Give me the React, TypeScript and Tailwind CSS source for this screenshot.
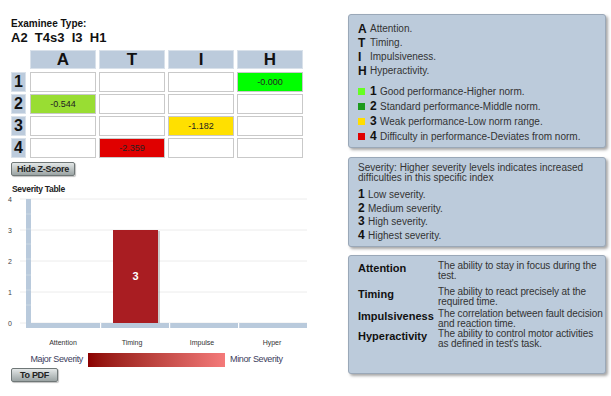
import React from "react";

const COLS = ["A", "T", "I", "H"];

// grid[row][col] -> [value, bg]
const CELLS: Record<string, [string, string]> = {
  "0-3": ["-0.000", "bg-[#00ff00]"],
  "1-0": ["-0.544", "bg-[#99dd33]"],
  "2-2": ["-1.182", "bg-[#ffe000]"],
  "3-1": ["-2.359", "bg-[#e00000]"],
};

function Btn({ children, className = "" }: { children: React.ReactNode; className?: string }) {
  return (
    <button
      type="button"
      className={
        "flex h-[14px] items-center justify-center whitespace-nowrap rounded-[2px] border border-[#6f7777] bg-gradient-to-b from-[#e3e7e7] to-[#9ba4a4] text-[9px] font-bold leading-[12px] tracking-[-0.3px] text-[#222] shadow-[1px_1px_1px_rgba(0,0,0,0.25)] " +
        className
      }
    >
      {children}
    </button>
  );
}

function ZTable() {
  return (
    <div className="ml-[11px] mt-[4px] flex shrink-0 flex-col">
      <div className="flex h-[19px] gap-[3px] pl-[19px]">
        {COLS.map((c) => (
          <div
            key={c}
            className="flex w-[66px] items-center justify-center border border-[#d9e1ea] bg-[#bccbdc] text-[17px] font-bold leading-none text-[#111]"
          >
            {c}
          </div>
        ))}
      </div>
      <div className="mt-[3px] flex flex-col gap-[2px]">
        {[0, 1, 2, 3].map((r) => (
          <div key={r} className="flex h-[20px]">
            <div className="flex w-[15px] items-center justify-center border border-[#d9e1ea] bg-[#bccbdc] text-[16px] font-bold leading-none text-[#111]">
              {r + 1}
            </div>
            <div className="ml-[4px] flex gap-[3px]">
              {COLS.map((_, c) => {
                const cell = CELLS[`${r}-${c}`];
                return (
                  <div
                    key={c}
                    className={
                      "flex w-[66px] items-center justify-center border border-[#c9c9c9] text-[9px] leading-none text-[#222] " +
                      (cell ? cell[1] : "bg-white")
                    }
                  >
                    {cell ? cell[0] : ""}
                  </div>
                );
              })}
            </div>
          </div>
        ))}
      </div>
    </div>
  );
}

function SeverityChart() {
  const ys = [4, 3, 2, 1, 0];
  const y = (v: number) => 128 - v * 31;
  const cats = [
    ["Attention", 63],
    ["Timing", 132],
    ["Impulse", 202],
    ["Hyper", 272],
  ] as const;
  const ff = "Liberation Sans, Arial, sans-serif";
  return (
    <svg width="310" height="152" className="block shrink-0">
      {ys.map((v) => (
        <g key={v}>
          <line x1="20" x2="307" y1={y(v)} y2={y(v)} stroke="#ececec" strokeWidth="1" />
          <text x="10" y={y(v) + 2.5} fontSize="7" fill="#444" textAnchor="middle" fontFamily={ff}>
            {v}
          </text>
        </g>
      ))}
      {/* y axis band */}
      <rect x="26" y="4" width="5" height="129" fill="#b9cadc" />
      {[19, 34, 49, 64, 80, 95, 110].map((yy) => (
        <line key={yy} x1="26" x2="31" y1={yy} y2={yy} stroke="#d6e0ea" strokeWidth="0.6" />
      ))}
      {/* x axis band */}
      <rect x="31" y="128" width="276" height="5" fill="#b9cadc" />
      {[100, 169, 238].map((xx) => (
        <rect key={xx} x={xx} y="128" width="1.2" height="5" fill="#ffffff" />
      ))}
      {/* bar */}
      <rect x="115" y="36" width="45" height="92" fill="#9a9a9a" opacity="0.5" />
      <rect x="113" y="35" width="45" height="93" fill="#a91d22" />
      <text x="135.5" y="85" fontSize="11" fontWeight="bold" fill="#fff" textAnchor="middle" fontFamily={ff}>
        3
      </text>
      {cats.map(([label, cx]) => (
        <text key={label} x={cx} y="149.5" fontSize="7" fill="#333" textAnchor="middle" fontFamily={ff}>
          {label}
        </text>
      ))}
    </svg>
  );
}

function Box({ children, className = "" }: { children: React.ReactNode; className?: string }) {
  return (
    <div
      className={
        "shrink-0 rounded-[3px] border border-[#9aa8b8] bg-[#bccbdb] pl-[9px] text-[10px] text-[#333] shadow-[2px_2px_3px_rgba(0,0,0,0.35)] " +
        className
      }
    >
      {children}
    </div>
  );
}

const DEFS: [string, string[], string][] = [
  ["Attention", ["The ability to stay in focus during the", "test."], "mt-0"],
  ["Timing", ["The ability to react precisely at the", "required time."], "mt-[6px]"],
  ["Impulsiveness", ["The correlation between fault decision", "and reaction time."], "mt-[2px]"],
  ["Hyperactivity", ["The ability to control motor activities", "as defined in test's task."], "mt-0"],
];

export default function App() {
  return (
    <div className="flex h-[396px] w-[611px] bg-white font-[family-name:Liberation_Sans,Arial,sans-serif]">
      {/* left column */}
      <div className="flex w-[310px] flex-col">
        <div className="ml-[11px] pt-[18px] text-[10px] font-bold leading-[12px] text-[#111]">Examinee Type:</div>
        <div className="ml-[11px] whitespace-pre text-[13px] font-bold leading-[16px] text-[#111]">
          {"A2  T4s3  I3  H1"}
        </div>
        <ZTable />
        <div className="ml-[11px] mt-[4px] flex">
          <Btn className="w-[64px]">Hide Z-Score</Btn>
        </div>
        <div className="ml-[12px] mt-[7px] text-[8.5px] font-bold leading-[12px] tracking-[-0.3px] text-[#222]">
          Severity Table
        </div>
        <SeverityChart />
        <div className="mt-[6px] flex h-[14px] shrink-0 items-center whitespace-nowrap text-[9px] tracking-[-0.35px] text-[#3c3c5c]">
          <span className="w-[83px] text-right">Major Severity</span>
          <div className="ml-[5px] h-[14px] w-[137px] bg-gradient-to-r from-[#8b0000] to-[#f47a7a]" />
          <span className="ml-[5px]">Minor Severity</span>
        </div>
        <div className="ml-[11px] mt-[1px] flex">
          <Btn className="w-[47px]">To PDF</Btn>
        </div>
      </div>

      {/* right column */}
      <div className="ml-[38px] flex w-[258px] flex-col">
        <Box className="mt-[14px] h-[134px] pt-[7px]">
          <div className="flex flex-col leading-[14px]">
            {[
              ["A", "Attention."],
              ["T", "Timing."],
              ["I", "Impulsiveness."],
              ["H", "Hyperactivity."],
            ].map(([k, v]) => (
              <div key={k} className="flex items-center">
                <span className="w-[12px] text-[12px] font-bold text-[#111]">{k}</span>
                <span>{v}</span>
              </div>
            ))}
          </div>
          <div className="mt-[6px] flex flex-col leading-[15px]">
            {[
              ["bg-[#66ff22]", "1", "Good performance-Higher norm."],
              ["bg-[#1d9a1d]", "2", "Standard performance-Middle norm."],
              ["bg-[#ffdd00]", "3", "Weak performance-Low norm range."],
              ["bg-[#e00000]", "4", "Difficulty in performance-Deviates from norm."],
            ].map(([c, n, t]) => (
              <div key={n} className="flex items-center">
                <span className={"h-[7px] w-[7px] " + c} />
                <span className="ml-[5px] w-[10px] text-[12px] font-bold text-[#111]">{n}</span>
                <span>{t}</span>
              </div>
            ))}
          </div>
        </Box>

        <Box className="mt-[9px] h-[90px] pt-[5px]">
          <div className="pr-[6px] leading-[10px]">
            Severity: Higher severity levels indicates increased difficulties in this specific index
          </div>
          <div className="mt-[5px] flex flex-col leading-[13.7px]">
            {["Low severity.", "Medium severity.", "High severity.", "Highest severity."].map((t, i) => (
              <div key={t} className="flex items-center">
                <span className="w-[10px] text-[12px] font-bold text-[#111]">{i + 1}</span>
                <span>{t}</span>
              </div>
            ))}
          </div>
        </Box>

        <Box className="mt-[8px] h-[119px] pt-[5px]">
          {DEFS.map(([k, lines, m]) => (
            <div key={k} className={"flex " + m}>
              <span className="w-[80px] shrink-0 text-[11px] font-bold leading-[14px] text-[#111]">{k}</span>
              <span className="flex flex-col whitespace-nowrap leading-[10px] tracking-[-0.1px]">
                {lines.map((l) => (
                  <span key={l}>{l}</span>
                ))}
              </span>
            </div>
          ))}
        </Box>
      </div>
    </div>
  );
}
